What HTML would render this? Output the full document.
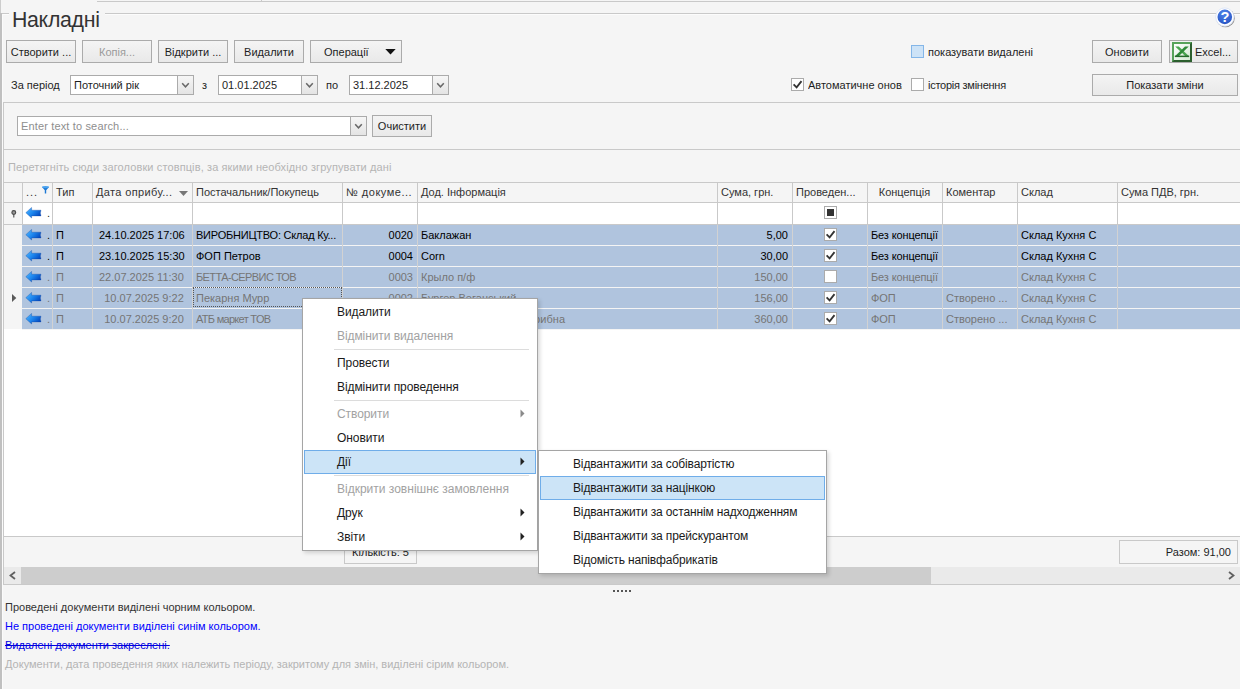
<!DOCTYPE html>
<html lang="uk">
<head>
<meta charset="utf-8">
<title>Накладні</title>
<style>
*{box-sizing:border-box;margin:0;padding:0}
html,body{width:1240px;height:689px;overflow:hidden;background:#f5f5f5}
body{position:relative;font-family:"Liberation Sans","DejaVu Sans",sans-serif;font-size:11px;color:#1e1e1e}
.a{position:absolute;white-space:nowrap}
.ln{position:absolute;background:#c9c9c9}
.btn{position:absolute;height:23px;border:1px solid #ababab;background:linear-gradient(#f4f4f4,#e9e9e9);text-align:center;line-height:22px;white-space:nowrap;overflow:hidden;color:#1e1e1e}
.btn.dis{color:#9a9a9a}
.inp{position:absolute;height:20px;border:1px solid #ababab;background:#fff;line-height:18px;padding-left:3px;white-space:nowrap;overflow:hidden}
.dd{position:absolute;right:0;top:0;width:16px;height:18px;border-left:1px solid #ababab;background:linear-gradient(#f6f6f6,#e4e4e4)}
.dd svg{position:absolute;left:3px;top:6px}
.cb{position:absolute;width:13px;height:13px;border:1px solid #ababab;background:#fff}
.cb svg{position:absolute;left:0;top:0}
.t{position:absolute;white-space:nowrap;line-height:14px}

.row{position:absolute;left:18px;width:1218px;height:21px;background:#b0c4de;border-bottom:1px solid #f4f4f4}
.row .c{top:0;height:20px;line-height:20px}
.c{position:absolute;padding-left:4px;white-space:nowrap;overflow:hidden}
.row .c{margin-left:-18px}
.c.r{text-align:right;padding-right:4px}
.h{position:absolute;top:1px;height:19px;line-height:19px;padding-left:4px;white-space:nowrap;overflow:hidden;color:#333}
.arw{position:absolute;left:3px;top:4px}
.dot{position:absolute;left:25px;top:0}

.menu{position:absolute;background:#fff;border:1px solid #a5a5a5;padding:1px;box-shadow:2px 2px 4px rgba(0,0,0,.15);font-size:12px;color:#1a1a1a;letter-spacing:-0.08px}
.mi{position:relative;height:24px;line-height:23px;padding-left:32px;white-space:nowrap;border:1px solid transparent}
.mi.dis{color:#a2a2a2}
.mi.hl{background:#cce4f7;border-color:#6fade9}
.ms{height:3px;position:relative}
.ms:after{content:"";position:absolute;left:30px;right:7px;top:1px;height:1px;background:#dcdcdc}
.mi svg{position:absolute;right:10px;top:6px}
#m2{letter-spacing:-0.14px}
</style>
</head>
<body>
<svg width="0" height="0" style="position:absolute"><defs>
<linearGradient id="ag" x1="0" y1="0.2" x2="1" y2="0.8"><stop offset="0" stop-color="#4db4ff"/><stop offset=".45" stop-color="#1d86ee"/><stop offset="1" stop-color="#0040b8"/></linearGradient>
<path id="arw" d="M0.8 5.7L6.6 0.4V3.2H16L15.3 6L16 8.9H6.6V11z" fill="url(#ag)" stroke="#0b3f9c" stroke-opacity=".55" stroke-width=".6"/>
</defs></svg>
<!-- top chrome lines -->
<div class="ln" style="left:97px;top:1px;width:1143px;height:1px"></div>
<div class="ln" style="left:261px;top:0;width:1px;height:2px"></div>
<div class="ln" style="left:0;top:13px;width:1240px;height:1px"></div>
<div class="ln" style="left:2px;top:14px;width:1238px;height:1px;background:#fcfcfc"></div>
<div class="ln" style="left:0;top:0;width:1px;height:13px;background:#cdcdcd"></div>
<div class="ln" style="left:0;top:13px;width:2px;height:676px;background:#c0c0c0"></div>
<div class="ln" style="left:2px;top:14px;width:1px;height:675px;background:#fbfbfb"></div>
<div class="a" style="left:9px;top:4px;width:96px;height:28px;background:#f5f5f5"></div>
<div class="a" id="title" style="left:12px;top:6px;font-size:21.3px;letter-spacing:-0.3px;line-height:28px;color:#333">Накладні</div>

<!-- toolbar row 1 -->
<div class="btn" style="left:6px;top:40px;width:70px">Створити ...</div>
<div class="btn dis" style="left:82px;top:40px;width:70px">Копія...</div>
<div class="btn" style="left:158px;top:40px;width:70px">Відкрити ...</div>
<div class="btn" style="left:234px;top:40px;width:70px">Видалити</div>
<div class="btn" style="left:310px;top:40px;width:92px;text-align:left;padding-left:13px">Операції<svg style="position:absolute;left:74px;top:8px" width="11" height="6"><path d="M0.3 0h10.4L5.5 5.6z" fill="#111"/></svg></div>

<div class="cb" style="left:911px;top:45px;background:#cde3f7;border-color:#84b6e8"></div>
<div class="t" style="left:928px;top:45px">показувати видалені</div>
<div class="btn" style="left:1092px;top:40px;width:70px">Оновити</div>
<div class="btn" id="excel" style="left:1169px;top:40px;width:69px;text-align:left;padding-left:25px">Excel...
<svg style="position:absolute;left:2px;top:1px" width="20" height="20" viewBox="0 0 20 20"><defs><linearGradient id="xg" x1="0" y1="0" x2="1" y2="1"><stop offset="0" stop-color="#ffffff"/><stop offset="1" stop-color="#d4ead4"/></linearGradient></defs><rect x="0" y="0" width="20" height="20" fill="#2c5f2e"/><path d="M0 0h20L18 2H2V18L0 20z" fill="#57a35a"/><rect x="2" y="2" width="16" height="16" fill="url(#xg)"/><path d="M3.2 4.5h3.6L16.8 14h-3.6z" fill="#4aa550"/><path d="M13 4.5h3.7L7 14H3.2z" fill="#2f8a38"/><path d="M2.8 13.6h14.4v1.5H2.8z" fill="#256a2b"/></svg></div>
<svg class="a" style="left:1214px;top:6px" width="22" height="22" viewBox="0 0 22 22"><defs><radialGradient id="hg" cx=".45" cy=".25" r=".85"><stop offset="0" stop-color="#4f83ea"/><stop offset="1" stop-color="#2450c0"/></radialGradient></defs><circle cx="11.5" cy="11.9" r="9.3" fill="#444" opacity=".55"/><circle cx="10.8" cy="11" r="9.4" fill="#fff"/><circle cx="10.8" cy="11" r="9.1" fill="none" stroke="#c9d6f2" stroke-width=".6"/><circle cx="10.8" cy="10.9" r="7.3" fill="url(#hg)"/><text x="10.9" y="16.4" text-anchor="middle" font-family="Liberation Sans,sans-serif" font-weight="bold" font-size="14.6" fill="#fff">?</text></svg>

<!-- toolbar row 2 -->
<div class="t" style="left:11px;top:78px">За період</div>
<div class="inp" style="left:70px;top:75px;width:124px">Поточний рік<div class="dd"><svg width="9" height="7"><path d="M1.2 1.2l3.3 3.6L7.8 1.2" fill="none" stroke="#686868" stroke-width="1.5"/></svg></div></div>
<div class="t" style="left:202px;top:78px">з</div>
<div class="inp" style="left:218px;top:75px;width:100px">01.01.2025<div class="dd"><svg width="9" height="7"><path d="M1.2 1.2l3.3 3.6L7.8 1.2" fill="none" stroke="#686868" stroke-width="1.5"/></svg></div></div>
<div class="t" style="left:326px;top:78px">по</div>
<div class="inp" style="left:349px;top:75px;width:100px">31.12.2025<div class="dd"><svg width="9" height="7"><path d="M1.2 1.2l3.3 3.6L7.8 1.2" fill="none" stroke="#686868" stroke-width="1.5"/></svg></div></div>

<div class="cb" style="left:791px;top:78px"><svg width="11" height="11"><path d="M1.6 5.4l3 3 4.9-6.3" fill="none" stroke="#333" stroke-width="1.8"/></svg></div>
<div class="t" style="left:808px;top:78px;width:94px;overflow:hidden">Автоматичне оновлення</div>
<div class="cb" style="left:911px;top:78px"></div>
<div class="t" style="left:928px;top:78px;letter-spacing:-0.25px">історія змінення</div>
<div class="btn" style="left:1092px;top:74px;width:146px;height:22px;line-height:20px">Показати зміни</div>

<!-- search panel -->
<div class="ln" style="left:3px;top:102px;width:1237px;height:1px"></div>
<div class="ln" style="left:3px;top:102px;width:1px;height:483px"></div>
<div class="inp" style="left:17px;top:116px;width:350px;color:#8e8e8e;letter-spacing:0.15px">Enter text to search...<div class="dd"><svg width="9" height="7"><path d="M1.2 1.2l3.3 3.6L7.8 1.2" fill="none" stroke="#686868" stroke-width="1.5"/></svg></div></div>
<div class="btn" style="left:372px;top:115px;width:60px;height:22px;line-height:20px">Очистити</div>
<div class="ln" style="left:4px;top:149px;width:1236px;height:1px"></div>
<div class="t" style="left:8px;top:160px;color:#b4b4b4;letter-spacing:0.115px">Перетягніть сюди заголовки стовпців, за якими необхідно згрупувати дані</div>

<!--GRID-->
<div id="grid" class="a" style="left:4px;top:182px;width:1236px;height:354px;background:#fff;overflow:hidden">
<div class="a" style="left:0;top:0;width:1236px;height:21px;background:#f5f5f5;border-top:1px solid #c9c9c9;border-bottom:1px solid #c9c9c9"></div>
<div class="a" style="left:0;top:21px;width:18px;height:126px;background:#f5f5f5"></div>
<div class="ln" style="left:0;top:42px;width:1236px;height:1px;background:#c9c9c9"></div>
<div class="row" style="top:43px;color:#000">
<div class="c" style="left:18px;width:30px"><svg class="arw" width="17" height="12" viewBox="0 0 17 12"><use href="#arw"/></svg><span class="dot">.</span></div>
<div class="c" style="left:48px;width:40px">П</div>
<div class="c" style="left:88px;width:100px;padding-left:7px">24.10.2025 17:06</div>
<div class="c" style="left:188px;width:150px;letter-spacing:-0.22px">ВИРОБНИЦТВО: Склад Ку...</div>
<div class="c r" style="left:338px;width:75px">0020</div>
<div class="c" style="left:413px;width:300px">Баклажан</div>
<div class="c r" style="left:713px;width:75px">5,00</div>
<div class="c" style="left:788px;width:75px"><div class="cb" style="left:32px;top:3px"><svg width="11" height="11"><path d="M1.6 5.4l3 3 4.9-6.3" fill="none" stroke="#333" stroke-width="1.8"/></svg></div></div>
<div class="c" style="left:863px;width:75px;letter-spacing:-0.12px">Без концепції</div>
<div class="c" style="left:938px;width:75px"></div>
<div class="c" style="left:1013px;width:100px">Склад Кухня С</div>
</div>
<div class="row" style="top:64px;color:#000">
<div class="c" style="left:18px;width:30px"><svg class="arw" width="17" height="12" viewBox="0 0 17 12"><use href="#arw"/></svg><span class="dot">.</span></div>
<div class="c" style="left:48px;width:40px">П</div>
<div class="c" style="left:88px;width:100px;padding-left:7px">23.10.2025 15:30</div>
<div class="c" style="left:188px;width:150px">ФОП Петров</div>
<div class="c r" style="left:338px;width:75px">0004</div>
<div class="c" style="left:413px;width:300px">Corn</div>
<div class="c r" style="left:713px;width:75px">30,00</div>
<div class="c" style="left:788px;width:75px"><div class="cb" style="left:32px;top:3px"><svg width="11" height="11"><path d="M1.6 5.4l3 3 4.9-6.3" fill="none" stroke="#333" stroke-width="1.8"/></svg></div></div>
<div class="c" style="left:863px;width:75px;letter-spacing:-0.12px">Без концепції</div>
<div class="c" style="left:938px;width:75px"></div>
<div class="c" style="left:1013px;width:100px">Склад Кухня С</div>
</div>
<div class="row" style="top:85px;color:#757575">
<div class="c" style="left:18px;width:30px"><svg class="arw" width="17" height="12" viewBox="0 0 17 12"><use href="#arw"/></svg><span class="dot">.</span></div>
<div class="c" style="left:48px;width:40px">П</div>
<div class="c" style="left:88px;width:100px;padding-left:7px">22.07.2025 11:30</div>
<div class="c" style="left:188px;width:150px;letter-spacing:-0.6px">БЕТТА-СЕРВИС ТОВ</div>
<div class="c r" style="left:338px;width:75px">0003</div>
<div class="c" style="left:413px;width:300px">Крыло п/ф</div>
<div class="c r" style="left:713px;width:75px">150,00</div>
<div class="c" style="left:788px;width:75px"><div class="cb" style="left:32px;top:3px"></div></div>
<div class="c" style="left:863px;width:75px;letter-spacing:-0.12px">Без концепції</div>
<div class="c" style="left:938px;width:75px"></div>
<div class="c" style="left:1013px;width:100px">Склад Кухня С</div>
</div>
<div class="row" style="top:106px;color:#757575">
<div class="c" style="left:18px;width:30px"><svg class="arw" width="17" height="12" viewBox="0 0 17 12"><use href="#arw"/></svg><span class="dot">.</span></div>
<div class="c" style="left:48px;width:40px">П</div>
<div class="c" style="left:88px;width:100px;text-align:center">10.07.2025 9:22</div>
<div class="c" style="left:188px;width:150px">Пекарня Мурр</div>
<div class="c r" style="left:338px;width:75px">0002</div>
<div class="c" style="left:413px;width:300px">Бургер Веганський</div>
<div class="c r" style="left:713px;width:75px">156,00</div>
<div class="c" style="left:788px;width:75px"><div class="cb" style="left:32px;top:3px"><svg width="11" height="11"><path d="M1.6 5.4l3 3 4.9-6.3" fill="none" stroke="#333" stroke-width="1.8"/></svg></div></div>
<div class="c" style="left:863px;width:75px;letter-spacing:-0.12px">ФОП</div>
<div class="c" style="left:938px;width:75px">Створено ...</div>
<div class="c" style="left:1013px;width:100px">Склад Кухня С</div>
</div>
<div class="row" style="top:127px;color:#757575">
<div class="c" style="left:18px;width:30px"><svg class="arw" width="17" height="12" viewBox="0 0 17 12"><use href="#arw"/></svg><span class="dot">.</span></div>
<div class="c" style="left:48px;width:40px">П</div>
<div class="c" style="left:88px;width:100px;text-align:center">10.07.2025 9:20</div>
<div class="c" style="left:188px;width:150px;letter-spacing:-0.7px">АТБ маркет ТОВ</div>
<div class="c r" style="left:338px;width:75px">0001</div>
<div class="c" style="left:413px;width:300px;letter-spacing:0.08px">Булочка для бургерів рибна</div>
<div class="c r" style="left:713px;width:75px">360,00</div>
<div class="c" style="left:788px;width:75px"><div class="cb" style="left:32px;top:3px"><svg width="11" height="11"><path d="M1.6 5.4l3 3 4.9-6.3" fill="none" stroke="#333" stroke-width="1.8"/></svg></div></div>
<div class="c" style="left:863px;width:75px;letter-spacing:-0.12px">ФОП</div>
<div class="c" style="left:938px;width:75px">Створено ...</div>
<div class="c" style="left:1013px;width:100px">Склад Кухня С</div>
</div>
<div class="h" style="left:18px;width:30px;letter-spacing:1px">...</div>
<div class="h" style="left:48px;width:40px">Тип</div>
<div class="h" style="left:88px;width:100px;letter-spacing:0.36px">Дата оприбу...</div>
<div class="h" style="left:188px;width:150px">Постачальник/Покупець</div>
<div class="h" style="left:338px;width:75px;letter-spacing:0.5px">№ докуме...</div>
<div class="h" style="left:413px;width:300px">Дод. Інформація</div>
<div class="h" style="left:713px;width:75px">Сума, грн.</div>
<div class="h" style="left:788px;width:75px">Проведен...</div>
<div class="h" style="left:863px;width:75px;text-align:center;padding-left:0">Концепція</div>
<div class="h" style="left:938px;width:75px">Коментар</div>
<div class="h" style="left:1013px;width:100px">Склад</div>
<div class="h" style="left:1113px;width:123px">Сума ПДВ, грн.</div>
<div class="ln" style="left:18px;top:1px;width:1px;height:41px;background:#c9c9c9"></div>
<div class="ln" style="left:48px;top:1px;width:1px;height:42px;background:#c9c9c9"></div>
<div class="ln" style="left:48px;top:43px;width:1px;height:104px;background:#d2d2d2"></div>
<div class="ln" style="left:88px;top:1px;width:1px;height:42px;background:#c9c9c9"></div>
<div class="ln" style="left:88px;top:43px;width:1px;height:104px;background:#d2d2d2"></div>
<div class="ln" style="left:188px;top:1px;width:1px;height:42px;background:#c9c9c9"></div>
<div class="ln" style="left:188px;top:43px;width:1px;height:104px;background:#d2d2d2"></div>
<div class="ln" style="left:338px;top:1px;width:1px;height:42px;background:#c9c9c9"></div>
<div class="ln" style="left:338px;top:43px;width:1px;height:104px;background:#d2d2d2"></div>
<div class="ln" style="left:413px;top:1px;width:1px;height:42px;background:#c9c9c9"></div>
<div class="ln" style="left:413px;top:43px;width:1px;height:104px;background:#d2d2d2"></div>
<div class="ln" style="left:713px;top:1px;width:1px;height:42px;background:#c9c9c9"></div>
<div class="ln" style="left:713px;top:43px;width:1px;height:104px;background:#d2d2d2"></div>
<div class="ln" style="left:788px;top:1px;width:1px;height:42px;background:#c9c9c9"></div>
<div class="ln" style="left:788px;top:43px;width:1px;height:104px;background:#d2d2d2"></div>
<div class="ln" style="left:863px;top:1px;width:1px;height:42px;background:#c9c9c9"></div>
<div class="ln" style="left:863px;top:43px;width:1px;height:104px;background:#d2d2d2"></div>
<div class="ln" style="left:938px;top:1px;width:1px;height:42px;background:#c9c9c9"></div>
<div class="ln" style="left:938px;top:43px;width:1px;height:104px;background:#d2d2d2"></div>
<div class="ln" style="left:1013px;top:1px;width:1px;height:42px;background:#c9c9c9"></div>
<div class="ln" style="left:1013px;top:43px;width:1px;height:104px;background:#d2d2d2"></div>
<div class="ln" style="left:1113px;top:1px;width:1px;height:42px;background:#c9c9c9"></div>
<div class="ln" style="left:1113px;top:43px;width:1px;height:104px;background:#d2d2d2"></div>
<div class="c" style="left:18px;top:21px;width:30px;height:20px;line-height:20px"><svg class="arw" width="17" height="12" viewBox="0 0 17 12"><use href="#arw"/></svg><span class="dot">.</span></div>
<svg class="a" style="left:7px;top:28px" width="6" height="8"><circle cx="2.8" cy="2.5" r="1.9" fill="#9a9a9a" stroke="#4a4a4a" stroke-width="1.1"/><path d="M2.8 4.6v3" stroke="#4a4a4a" stroke-width="1.1"/></svg>
<div class="cb" style="left:820px;top:24px"><div class="a" style="left:2px;top:2px;width:7px;height:7px;background:#333"></div></div>
<svg class="a" style="left:38px;top:4px" width="7" height="8"><path d="M0 1h7L4.2 4.2V7.6H2.8V4.2z" fill="#1c78d4"/><ellipse cx="3.5" cy="1.1" rx="3.5" ry="1.1" fill="#4aa3f0"/></svg>
<svg class="a" style="left:175px;top:9px" width="9" height="5"><path d="M0 0h9L4.5 5z" fill="#777"/></svg>
<svg class="a" style="left:8px;top:112px" width="5" height="9"><path d="M0 0l4.3 4L0 8z" fill="#5a5a5a"/></svg>
<div class="a" style="left:189px;top:105px;width:149px;height:20px;border:1px dotted #555"></div>
</div>
<!--/GRID-->
<!--FOOTER-->
<div class="ln" style="left:4px;top:536px;width:1236px;height:1px"></div>
<div class="a" style="left:344px;top:540px;width:73px;height:24px;border:1px solid #c9c9c9;line-height:22px;text-align:center">Кількість: 5</div>
<div class="a" style="left:1119px;top:540px;width:119px;height:24px;border:1px solid #c9c9c9;line-height:22px;text-align:right;padding-right:6px">Разом: 91,00</div>
<div class="a" style="left:4px;top:567px;width:1236px;height:17px;background:#eaeaea"></div>
<div class="a" style="left:21px;top:567px;width:910px;height:17px;background:#cdcdcd"></div>
<svg class="a" style="left:9px;top:571px" width="7" height="9"><path d="M6 1L1.5 4.5L6 8" fill="none" stroke="#606060" stroke-width="1.8"/></svg>
<svg class="a" style="left:1228px;top:571px" width="7" height="9"><path d="M1 1L5.5 4.5L1 8" fill="none" stroke="#606060" stroke-width="1.8"/></svg>
<div class="ln" style="left:3px;top:584px;width:1237px;height:1px"></div>
<div class="a" style="left:613px;top:590px;width:2px;height:2px;background:#555"></div><div class="a" style="left:617px;top:590px;width:2px;height:2px;background:#555"></div><div class="a" style="left:621px;top:590px;width:2px;height:2px;background:#555"></div><div class="a" style="left:625px;top:590px;width:2px;height:2px;background:#555"></div><div class="a" style="left:629px;top:590px;width:2px;height:2px;background:#555"></div>
<div class="t" style="left:5px;top:600px;color:#333">Проведені документи виділені чорним кольором.</div>
<div class="t" style="left:5px;top:619px;color:#0000ff">Не проведені документи виділені синім кольором.</div>
<div class="t" style="left:5px;top:638px;color:#0000e0;text-decoration:line-through">Видалені документи закреслені.</div>
<div class="t" style="left:5px;top:657px;color:#b4b4b4">Документи, дата проведення яких належить періоду, закритому для змін, виділені сірим кольором.</div>

<!--MENUS-->
<div class="menu" id="m1" style="left:302px;top:298px;width:236px;height:253px">
<div class="mi">Видалити</div>
<div class="mi dis">Відмінити видалення</div>
<div class="ms"></div>
<div class="mi">Провести</div>
<div class="mi">Відмінити проведення</div>
<div class="ms"></div>
<div class="mi dis">Створити<svg width="5" height="9"><path d="M0.5 0.5l4 4L0.5 8.5z" fill="#8a8a8a"/></svg></div>
<div class="mi">Оновити</div>
<div class="mi hl">Дії<svg width="5" height="9"><path d="M0.5 0.5l4 4L0.5 8.5z" fill="#222"/></svg></div>
<div class="ms"></div>
<div class="mi dis" style="letter-spacing:0">Відкрити зовнішнє замовлення</div>
<div class="mi">Друк<svg width="5" height="9"><path d="M0.5 0.5l4 4L0.5 8.5z" fill="#222"/></svg></div>
<div class="mi">Звіти<svg width="5" height="9"><path d="M0.5 0.5l4 4L0.5 8.5z" fill="#222"/></svg></div>
</div>
<div class="menu" id="m2" style="left:538px;top:450px;width:289px;height:124px">
<div class="mi">Відвантажити за собівартістю</div>
<div class="mi hl">Відвантажити за націнкою</div>
<div class="mi">Відвантажити за останнім надходженням</div>
<div class="mi">Відвантажити за прейскурантом</div>
<div class="mi">Відомість напівфабрикатів</div>
</div>

</body>
</html>
